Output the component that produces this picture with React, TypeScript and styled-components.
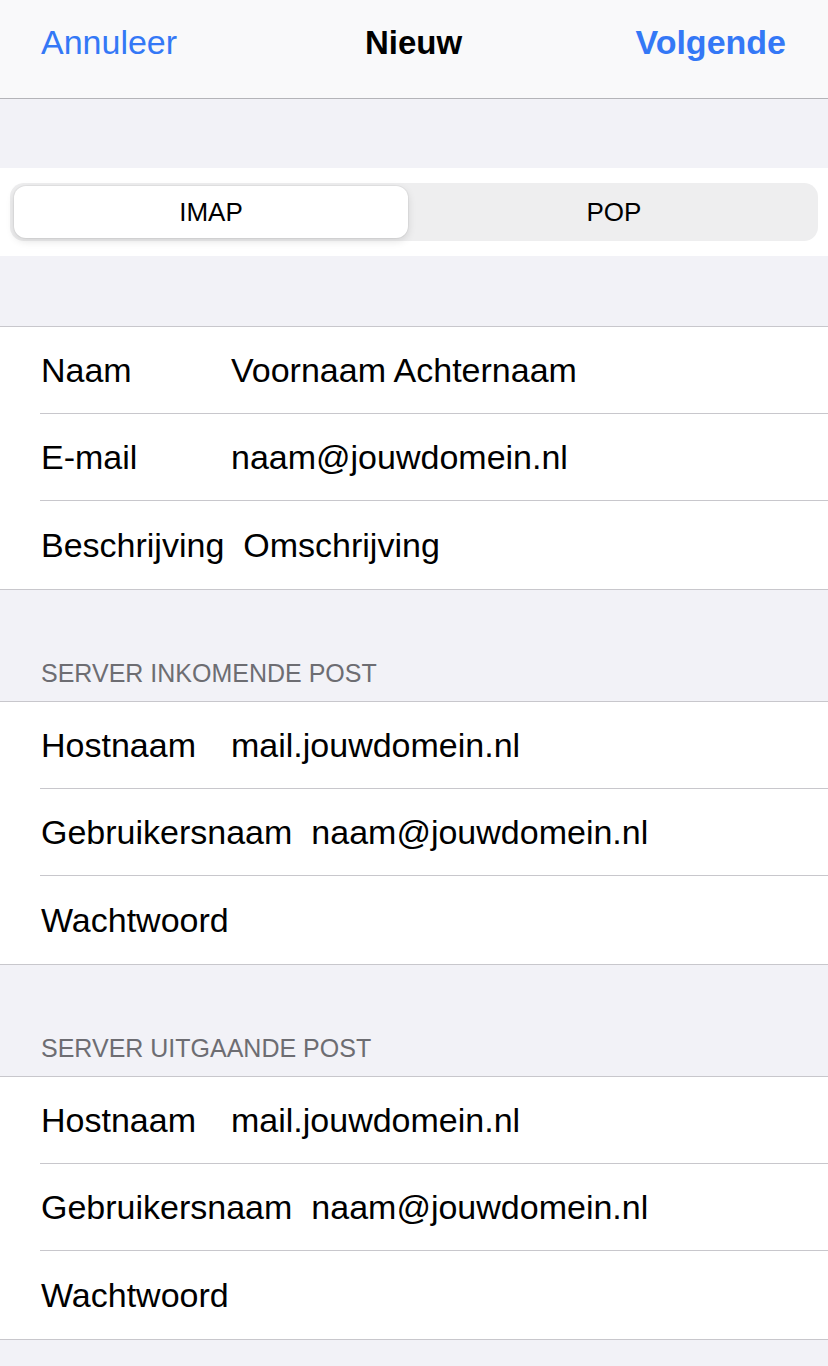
import React, { useState } from 'react';
import styled, { createGlobalStyle } from 'styled-components';

const GlobalStyle = createGlobalStyle`
  html, body {
    margin: 0;
    padding: 0;
    background: #f2f2f7;
    font-family: "Liberation Sans", Arial, sans-serif;
    -webkit-font-smoothing: antialiased;
  }
`;

const Page = styled.div`
  width: 828px;
  min-height: 1366px;
  background: #f2f2f7;
  display: flex;
  flex-direction: column;
`;

const NavBar = styled.header`
  height: 99px;
  box-sizing: border-box;
  padding: 23px 42px 0 41px;
  background: #f9f9fa;
  border-bottom: 1px solid #b4b4b8;
  display: grid;
  grid-template-columns: 1fr auto 1fr;
  align-items: start;
  line-height: 39px;
  font-size: 34px;
`;

const NavButton = styled.button<{ $bold?: boolean; $align?: 'left' | 'right' }>`
  background: none;
  border: 0;
  padding: 0;
  font: inherit;
  line-height: inherit;
  color: #3478f6;
  font-weight: ${(p) => (p.$bold ? 700 : 400)};
  text-align: ${(p) => p.$align || 'left'};
  justify-self: ${(p) => (p.$align === 'right' ? 'end' : 'start')};
  cursor: pointer;
`;

const NavTitle = styled.h1`
  margin: 0;
  font-size: 33px;
  font-weight: 700;
  color: #000;
  line-height: inherit;
`;

const Spacer = styled.div<{ $h: number }>`
  height: ${(p) => p.$h}px;
`;

const SegmentSection = styled.div`
  background: #fff;
  height: 88px;
  box-sizing: border-box;
  padding: 15px 10px 0;
`;

const Segmented = styled.div`
  height: 58px;
  box-sizing: border-box;
  padding: 3px 4px;
  border-radius: 14px;
  background: #eeeeef;
  display: grid;
  grid-template-columns: 1fr 1fr;
`;

const Segment = styled.button<{ $active: boolean }>`
  border: 0;
  margin: 0 ${(p) => (p.$active ? '6px' : '0')} 0 0;
  padding: 0;
  border-radius: 12px;
  font-family: inherit;
  font-size: 26px;
  color: #000;
  background: ${(p) => (p.$active ? '#fff' : 'transparent')};
  box-shadow: ${(p) =>
    p.$active ? '0 3px 8px rgba(0,0,0,0.12), 0 0 0 1px rgba(0,0,0,0.04)' : 'none'};
  cursor: pointer;
`;

const Group = styled.section`
  background: #fff;
  border-top: 1px solid #c8c7cc;
  border-bottom: 1px solid #c8c7cc;
`;

const GroupHeader = styled.div`
  height: 111px;
  box-sizing: border-box;
  padding: 0 40px 13px 41px;
  display: flex;
  align-items: flex-end;
  font-size: 25px;
  line-height: 30px;
  color: #6d6d72;
  text-transform: uppercase;
`;

const Row = styled.div`
  padding-left: 40px;
`;

const RowInner = styled.div<{ $last: boolean }>`
  height: ${(p) => (p.$last ? 88 : 87)}px;
  box-sizing: border-box;
  display: flex;
  align-items: center;
  padding-left: 1px;
  border-bottom: ${(p) => (p.$last ? '0' : '1px solid #c8c7cc')};
  font-size: 34px;
  line-height: 39px;
  color: #000;
`;

const Label = styled.span`
  min-width: 171px;
  margin-right: 19px;
  white-space: nowrap;
`;

const Value = styled.span`
  white-space: nowrap;
`;

type Field = { label: string; value?: string };

const account: Field[] = [
  { label: 'Naam', value: 'Voornaam Achternaam' },
  { label: 'E-mail', value: 'naam@jouwdomein.nl' },
  { label: 'Beschrijving', value: 'Omschrijving' },
];

const server: Field[] = [
  { label: 'Hostnaam', value: 'mail.jouwdomein.nl' },
  { label: 'Gebruikersnaam', value: 'naam@jouwdomein.nl' },
  { label: 'Wachtwoord' },
];

const FieldGroup: React.FC<{ fields: Field[] }> = ({ fields }) => (
  <Group>
    {fields.map((f, i) => (
      <Row key={f.label}>
        <RowInner $last={i === fields.length - 1}>
          <Label>{f.label}</Label>
          {f.value && <Value>{f.value}</Value>}
        </RowInner>
      </Row>
    ))}
  </Group>
);

const App: React.FC = () => {
  const [type, setType] = useState<'IMAP' | 'POP'>('IMAP');

  return (
    <Page>
      <GlobalStyle />
      <NavBar>
        <NavButton $align="left">Annuleer</NavButton>
        <NavTitle>Nieuw</NavTitle>
        <NavButton $bold $align="right">Volgende</NavButton>
      </NavBar>

      <Spacer $h={69} />
      <SegmentSection>
        <Segmented>
          <Segment $active={type === 'IMAP'} onClick={() => setType('IMAP')}>IMAP</Segment>
          <Segment $active={type === 'POP'} onClick={() => setType('POP')}>POP</Segment>
        </Segmented>
      </SegmentSection>
      <Spacer $h={70} />

      <FieldGroup fields={account} />

      <GroupHeader>Server inkomende post</GroupHeader>
      <FieldGroup fields={server} />

      <GroupHeader>Server uitgaande post</GroupHeader>
      <FieldGroup fields={server} />
    </Page>
  );
};

export default App;
